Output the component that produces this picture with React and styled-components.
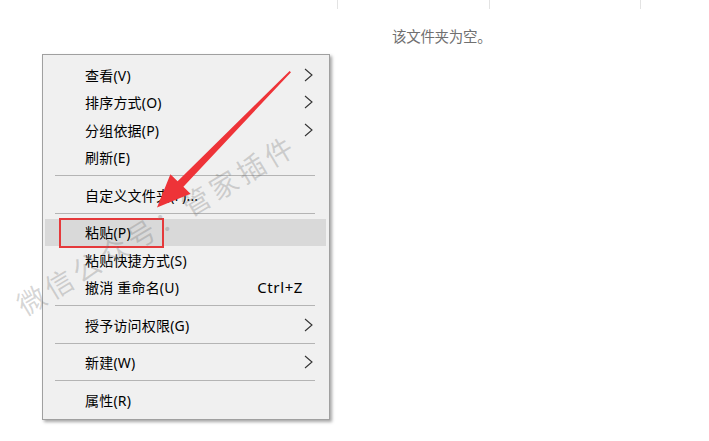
import React from 'react';
import styled, { createGlobalStyle } from 'styled-components';

const GlobalStyle = createGlobalStyle`
    html, body {
        margin: 0;
        padding: 0;
        background: #ffffff;
    }
    body {
        font-family: "Noto Sans", "Noto Sans CJK SC", sans-serif;
    }
`;

const Page = styled.div`
    position: relative;
    width: 709px;
    height: 441px;
    overflow: hidden;
    background: #ffffff;
`;

const HeaderStrip = styled.div`
    display: grid;
    grid-template-columns: 337px 152px 151px 1fr;
    height: 9px;
`;

const HeaderCell = styled.div`
    border-left: ${(p) => (p.$first ? 'none' : '1px solid #e3e3e3')};
`;

const EmptyNote = styled.div`
    padding: 18px 0 0 392px;
    font-family: "Noto Sans CJK SC", sans-serif;
    font-size: 14.5px;
    line-height: 18px;
    letter-spacing: -0.3px;
    color: #707070;
`;

const Menu = styled.div`
    position: absolute;
    left: 42px;
    top: 54px;
    width: 281px;
    padding: 6px 3px 5px 2px;
    box-sizing: content-box;
    background: #f0f0f0;
    border: 1px solid #a0a0a0;
    box-shadow: 2px 2px 3px rgba(0, 0, 0, 0.35);
    font-family: "Noto Sans", "Noto Sans CJK SC", sans-serif;
    font-size: 14px;
    color: #000000;
`;

const Item = styled.div`
    position: relative;
    display: flex;
    align-items: center;
    justify-content: space-between;
    height: 27.5px;
    padding: 0 13px 0 40px;
    background: ${(p) => (p.$active ? '#d9d9d9' : 'transparent')};
`;

const Label = styled.span`
    white-space: nowrap;
    letter-spacing: 0.2px;
`;

const Shortcut = styled.span`
    margin-right: 10px;
    font-size: 15px;
    letter-spacing: 0.6px;
`;

const Separator = styled.div`
    height: 1px;
    margin: 4px 11px 5px 10px;
    background: #b4b4b4;
`;

const HighlightBox = styled.div`
    position: absolute;
    left: 14px;
    top: -1px;
    width: 101px;
    height: 26px;
    border: 2px solid #e5393b;
    pointer-events: none;
`;

const Watermark = styled.div`
    position: absolute;
    left: 156px;
    top: 224px;
    transform: translate(-50%, -50%) rotate(-31deg);
    white-space: nowrap;
    font-family: "Noto Sans CJK SC", sans-serif;
    font-size: 28px;
    letter-spacing: 4px;
    color: rgba(110, 110, 110, 0.28);
    pointer-events: none;
`;

const ArrowLayer = styled.svg`
    position: absolute;
    left: 0;
    top: 0;
    pointer-events: none;
`;

const Chevron = () => (
    <svg width="9" height="14" viewBox="0 0 9 14">
        <polyline points="1,1 8,7 1,13" fill="none" stroke="#333" strokeWidth="1.1" />
    </svg>
);

const items = [
    { label: '查看(V)', sub: true },
    { label: '排序方式(O)', sub: true },
    { label: '分组依据(P)', sub: true },
    { label: '刷新(E)' },
    'sep',
    { label: '自定义文件夹(F)...' },
    'sep',
    { label: '粘贴(P)', active: true },
    { label: '粘贴快捷方式(S)' },
    { label: '撤消 重命名(U)', shortcut: 'Ctrl+Z' },
    'sep',
    { label: '授予访问权限(G)', sub: true },
    'sep',
    { label: '新建(W)', sub: true },
    'sep',
    { label: '属性(R)' },
];

const App = () => (
    <Page>
        <GlobalStyle />
        <HeaderStrip>
            <HeaderCell $first />
            <HeaderCell />
            <HeaderCell />
            <HeaderCell />
        </HeaderStrip>
        <EmptyNote>该文件夹为空。</EmptyNote>

        <Menu>
            {items.map((item, i) =>
                item === 'sep' ? (
                    <Separator key={i} />
                ) : (
                    <Item key={i} $active={item.active}>
                        <Label>{item.label}</Label>
                        {item.sub && <Chevron />}
                        {item.shortcut && <Shortcut>{item.shortcut}</Shortcut>}
                        {item.active && <HighlightBox />}
                    </Item>
                )
            )}
        </Menu>

        <Watermark>微信公众号：管家插件</Watermark>

        <ArrowLayer width="709" height="441" viewBox="0 0 709 441">
            <polygon
                points="291,72.2 183.4,186.8 190.5,193.8 157,207.5 170.4,174.3 177.6,181.2 289.6,71"
                fill="#ee3338"
            />
        </ArrowLayer>
    </Page>
);

export default App;
